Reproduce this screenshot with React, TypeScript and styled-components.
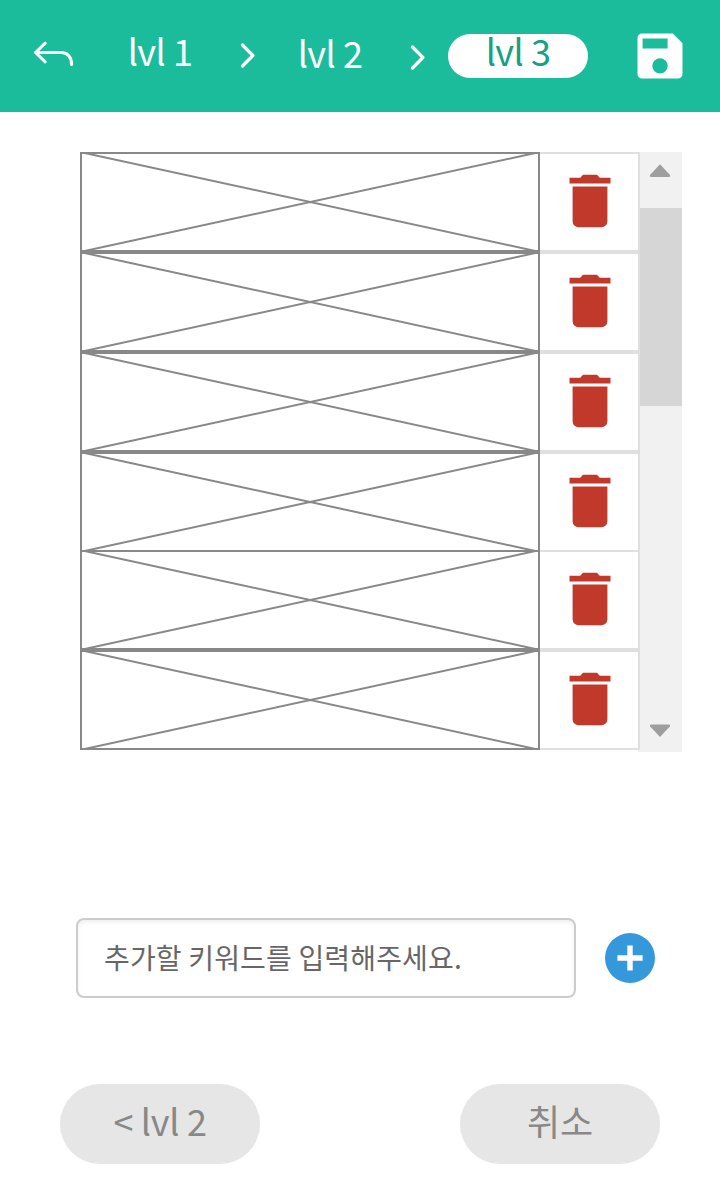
import React from 'react';
import styled, { createGlobalStyle } from 'styled-components';

const GlobalStyle = createGlobalStyle`
  * { box-sizing: border-box; }
  body {
    margin: 0;
    background: #fff;
    font-family: "Noto Sans CJK KR", "Noto Sans", sans-serif;
  }
  button {
    border: 0;
    padding: 0;
    background: none;
    font: inherit;
    color: inherit;
  }
  svg { display: block; }
`;

const Page = styled.div`
  width: 720px;
  height: 1200px;
  overflow: hidden;
  display: flex;
  flex-direction: column;
`;

const Header = styled.header`
  height: 112px;
  flex: none;
  display: grid;
  grid-template-columns: 108px 104px 72px 92px 72px 140px 132px;
  align-items: start;
  justify-items: center;
  background: #1abc9c;
  color: #fff;
`;

const HeaderIcon = styled.button<{ $top: number; $shift?: number }>`
  margin-top: ${p => p.$top}px;
  margin-left: ${p => p.$shift ?? 0}px;
`;

const Crumb = styled.span<{ $top: number }>`
  margin-top: ${p => p.$top}px;
  font-size: 36px;
  line-height: 44px;
  letter-spacing: -0.5px;
  white-space: nowrap;
`;

const ActiveCrumb = styled.span`
  width: 140px;
  height: 44px;
  margin-top: 34px;
  border-radius: 22px;
  background: #fff;
  color: #16a085;
  font-size: 36px;
  line-height: 32px;
  letter-spacing: -0.5px;
  text-align: center;
`;

const ListArea = styled.main`
  display: flex;
  align-items: flex-start;
  padding: 40px 0 0 80px;
`;

const List = styled.ul`
  width: 560px;
  margin: 0;
  padding: 0;
  list-style: none;
  z-index: 1;
`;

const Row = styled.li<{ $overlap: boolean }>`
  display: flex;
  height: 100px;
  margin-top: ${p => (p.$overlap ? -2 : 0)}px;
`;

const Placeholder = styled.div`
  width: 460px;
  border: 2px solid #888;
`;

const Cross = styled.svg`
  width: 456px;
  height: 96px;
  stroke: #888;
  stroke-width: 2;
`;

const DeleteCell = styled.button`
  width: 100px;
  display: flex;
  justify-content: center;
  padding: 20px 0 0 2px;
  border: solid #dfdfdf;
  border-width: 2px 2px 2px 0;
`;

const Scrollbar = styled.div`
  width: 44px;
  height: 600px;
  margin-left: -2px;
  padding-left: 2px;
  display: flex;
  flex-direction: column;
  background: #f1f1f1;
`;

const ScrollArrow = styled.div`
  height: 56px;
  padding: 12px 0 0 10px;
`;

const DownArrowSlot = styled.div`
  padding-left: 10px;
`;

const Thumb = styled.div`
  height: 198px;
  margin-bottom: 318px;
  background: #d6d6d6;
`;

const EntryRow = styled.section`
  display: flex;
  align-items: center;
  gap: 29px;
  margin-top: 166px;
  padding-left: 76px;
`;

const KeywordField = styled.div`
  width: 500px;
  height: 80px;
  padding-left: 26px;
  border: 2px solid #ccc;
  border-radius: 8px;
  box-shadow: inset 0 2px 4px rgba(0, 0, 0, 0.07);
  color: #666;
  font-size: 28px;
  line-height: 74px;
  letter-spacing: 0.17px;
  white-space: nowrap;
`;

const AddButton = styled.button`
  width: 50px;
  height: 50px;
  border-radius: 50%;
  background: #3498db;
`;

const Footer = styled.footer`
  display: flex;
  justify-content: space-between;
  margin-top: 86px;
  padding: 0 60px;
`;

const PillButton = styled.button<{ $tracking?: number }>`
  width: 200px;
  height: 80px;
  padding-bottom: 8px;
  border-radius: 40px;
  background: #e6e6e6;
  color: #888;
  font-size: 36px;
  line-height: 72px;
  letter-spacing: ${p => p.$tracking ?? 0}px;
  text-align: center;
`;

const BackIcon = () => (
  <svg width="42" height="28" viewBox="0 0 42 28" fill="none" stroke="#fff" strokeWidth="3" strokeLinecap="round" strokeLinejoin="round">
    <path d="M12.200 3.200 2.500 12.500l9.700 9.300M2.500 12.500H28.500c6 0 10.100 4.500 10.100 11.900" />
  </svg>
);

const ChevronIcon = () => (
  <svg width="16" height="26" viewBox="0 0 16 26" fill="none" stroke="#fff" strokeWidth="3.200" strokeLinecap="round" strokeLinejoin="round">
    <path d="M2.500 2 12.900 12.500 2.500 23" />
  </svg>
);

const SaveIcon = () => (
  <svg width="46" height="46" viewBox="0 0 46 46" fill="#fff" fillRule="evenodd">
    <path d="M5 .5h30.800L45.500 10.200v30.800a4.500 4.500 0 0 1-4.500 4.500H5A4.500 4.500 0 0 1 .5 41V5A4.500 4.500 0 0 1 5 .5ZM5.600 5.500v10h25v-10ZM23 25.200a7.700 7.700 0 1 0 0 15.400 7.700 7.700 0 0 0 0-15.400Z" />
  </svg>
);

const TrashIcon = () => (
  <svg width="42" height="54" viewBox="0 0 42 54" fill="#c0392b">
    <path d="M.5 9.600V3.700h10.800L14 .7h14l2.700 3h10.800v5.900ZM3.600 12.500h34.800v34.800a6 6 0 0 1-6 6H9.600a6 6 0 0 1-6-6Z" />
  </svg>
);

const UpArrow = () => (
  <svg width="20" height="14" viewBox="0 0 20 14" fill="#9e9e9e">
    <path d="M10 .2 20 11v1.200q0 .8-.8.8H.8Q0 13 0 12.200V11Z" />
  </svg>
);

const DownArrow = () => (
  <svg width="20" height="14" viewBox="0 0 20 14" fill="#9e9e9e">
    <path d="M10 13 20 2.200V1.200Q20 .4 19.200 .4H.8Q0 .4 0 1.200V2.200Z" />
  </svg>
);

const PlusIcon = () => (
  <svg width="50" height="50" viewBox="0 0 50 50" stroke="#fff" strokeWidth="5.400">
    <path d="M12.400 25h25.200M25 12.400v25.200" />
  </svg>
);

const rows = [
  { id: 1, overlap: false },
  { id: 2, overlap: false },
  { id: 3, overlap: false },
  { id: 4, overlap: false },
  { id: 5, overlap: true },
  { id: 6, overlap: false },
];

export default function App() {
  return (
    <Page>
      <GlobalStyle />
      <Header>
        <HeaderIcon $top={40} aria-label="back"><BackIcon /></HeaderIcon>
        <Crumb $top={28}>lvl 1</Crumb>
        <HeaderIcon as="span" $top={43}><ChevronIcon /></HeaderIcon>
        <Crumb $top={30}>lvl 2</Crumb>
        <HeaderIcon as="span" $top={45} $shift={12}><ChevronIcon /></HeaderIcon>
        <ActiveCrumb>lvl 3</ActiveCrumb>
        <HeaderIcon $top={33} $shift={12} aria-label="save"><SaveIcon /></HeaderIcon>
      </Header>

      <ListArea>
        <List>
          {rows.map(row => (
            <Row key={row.id} $overlap={row.overlap}>
              <Placeholder>
                <Cross viewBox="2 2 456 96">
                  <path d="M0 0 460 100M0 100 460 0" />
                </Cross>
              </Placeholder>
              <DeleteCell aria-label="delete"><TrashIcon /></DeleteCell>
            </Row>
          ))}
        </List>
        <Scrollbar>
          <ScrollArrow><UpArrow /></ScrollArrow>
          <Thumb />
          <DownArrowSlot><DownArrow /></DownArrowSlot>
        </Scrollbar>
      </ListArea>

      <EntryRow>
        <KeywordField>추가할 키워드를 입력해주세요.</KeywordField>
        <AddButton aria-label="add"><PlusIcon /></AddButton>
      </EntryRow>

      <Footer>
        <PillButton $tracking={-0.3}>&lt; lvl 2</PillButton>
        <PillButton $tracking={-0.1}>취소</PillButton>
      </Footer>
    </Page>
  );
}
